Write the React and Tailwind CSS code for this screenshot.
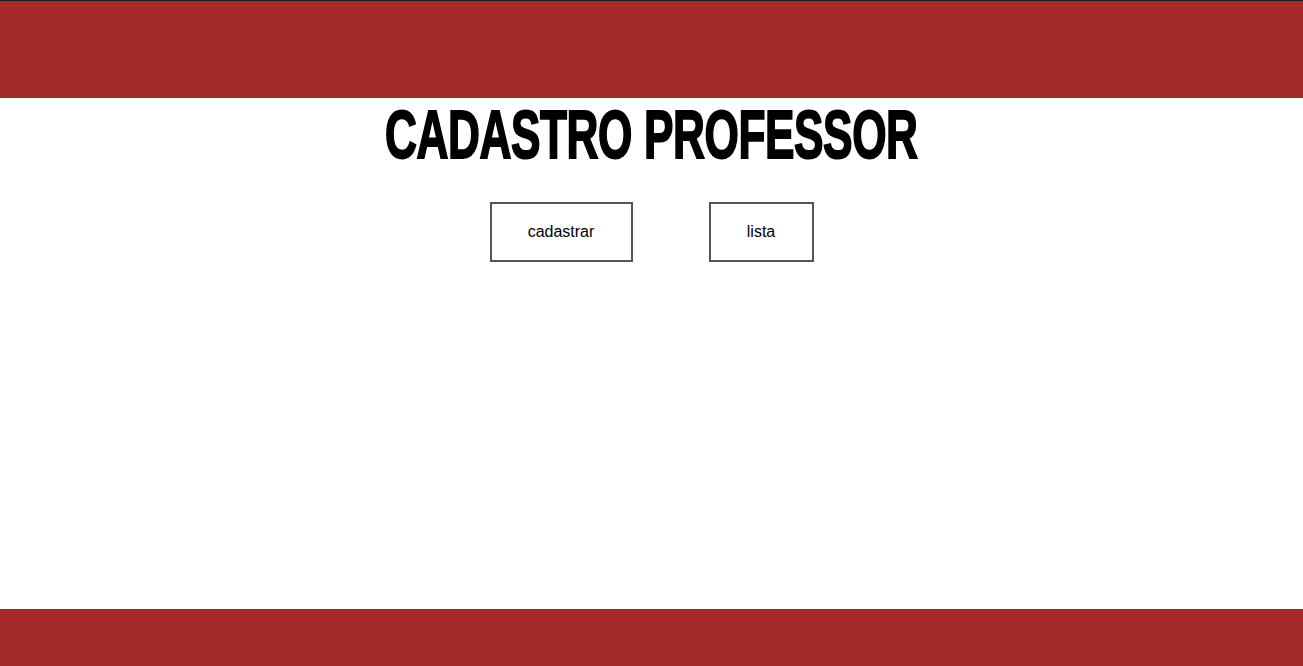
import React from "react";

const App = () => {
  return (
    <div className="flex flex-col min-h-screen bg-white font-['Liberation_Sans',Arial,sans-serif]">
      <header className="h-[98px] bg-[#a52a2a] border-t border-[#1b1b2a]" />
      <main className="flex-grow flex flex-col items-center">
        <h1 className="mt-[2px] h-[68px] flex items-center whitespace-nowrap font-['Liberation_Sans_Narrow','Liberation_Sans',sans-serif] font-bold text-[52px] leading-none text-black scale-x-[0.85] scale-y-[1.33] tracking-[-0.5px] [-webkit-text-stroke:1.5px_black]">
          CADASTRO PROFESSOR
        </h1>
        <div className="mt-[34px] flex gap-[76px]">
          <button className="h-[60px] w-[143px] border-2 border-[#555] text-[16px] text-black bg-white">
            cadastrar
          </button>
          <button className="h-[60px] w-[105px] border-2 border-[#555] text-[16px] text-black bg-white">
            lista
          </button>
        </div>
      </main>
      <footer className="h-[57px] bg-[#a52a2a]" />
    </div>
  );
};

export default App;
